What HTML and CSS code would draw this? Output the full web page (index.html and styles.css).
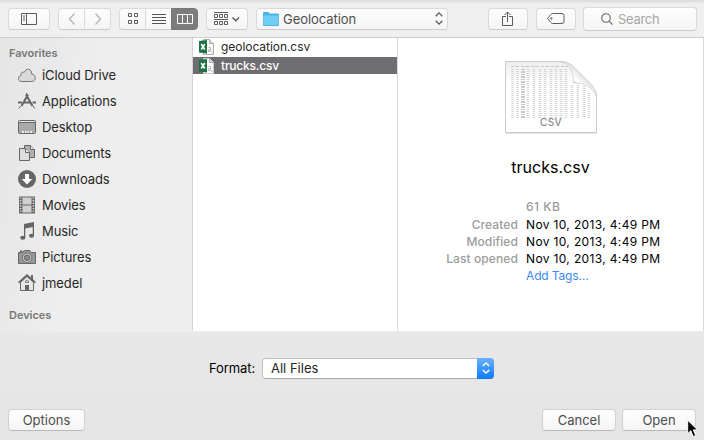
FILE: index.html
```html
<!DOCTYPE html>
<html lang="en">
<head>
<meta charset="utf-8">
<title>Open</title>
<link rel="stylesheet" href="styles.css">
</head>
<body>
<div class="dialog">
  <header class="toolbar">
    <button class="tool toggle" aria-label="Sidebar"><svg width="16" height="12" viewBox="0 0 16 12" fill="none" stroke="#5c5c5c"><path d="M.5.5h15v11H.5zM5.5.5v11M2 3h2M2 5h2M2 7h2"/></svg></button>
    <div class="group nav">
      <button class="tool" aria-label="Back"><svg width="8" height="12" viewBox="0 0 8 12" fill="none" stroke="#b5b5b5" stroke-width="1.3"><path d="M6.5.5l-5 5.5 5 5.5"/></svg></button>
      <button class="tool" aria-label="Forward"><svg width="8" height="12" viewBox="0 0 8 12" fill="none" stroke="#b5b5b5" stroke-width="1.3"><path d="M1.500.5l5 5.500-5 5.500"/></svg></button>
    </div>
    <div class="group views">
      <button class="tool" aria-label="Icons"><svg width="10" height="11" viewBox="0 0 10 11" fill="none" stroke="#5c5c5c"><path d="M.5.5h3v3h-3zM6.500.5h3v3h-3zM.5 7.500h3v3h-3zM6.500 7.500h3v3h-3z"/></svg></button>
      <button class="tool" aria-label="List"><svg width="14" height="10" viewBox="0 0 14 10" stroke="#555"><path d="M0 .5h14M0 3.500h14M0 6.500h14M0 9.500h14"/></svg></button>
      <button class="tool active" aria-label="Columns"><svg width="16" height="10" viewBox="0 0 16 10" fill="none" stroke="#fff"><path d="M.5.5h15v9H.5zM5.500.5v9M10.500.5v9"/></svg></button>
    </div>
    <button class="tool arrange" aria-label="Arrange"><svg width="26" height="13" viewBox="0 0 26 13" fill="none" stroke="#5c5c5c"><path d="M0 .5h14M0 7.500h14M.5 2.500h3v3h-3zM5.500 2.500h3v3h-3zM10.500 2.500h3v3h-3zM.5 9.500h3v3h-3zM5.500 9.500h3v3h-3zM10.500 9.500h3v3h-3z"/><path stroke-width="1.500" d="M18.500 5.500l3.200 3.200L25 5.500"/></svg></button>
    <button class="tool folder"><svg width="16" height="14" viewBox="0 0 16 14"><path fill="#4cb4e2" d="M0 1.500Q0 0 1 0h4.500l1 1.500H15q1 0 1 1V13q0 1-1 1H1q-1 0-1-1z"/><path fill="#70cdf4" d="M.5 3.500h15v9.500H.5z"/></svg><span class="label">Geolocation</span><svg width="8" height="13" viewBox="0 0 8 13" fill="none" stroke="#5a5a5a" stroke-width="1.300"><path d="M.7 4.200L4 .9l3.300 3.300M.7 8.800L4 12.100l3.300-3.300"/></svg></button>
    <button class="tool share" aria-label="Share"><svg width="12" height="16" viewBox="0 0 12 16" fill="none" stroke="#5c5c5c"><path d="M4 5.500H.5v9h10v-9H7M5.500 11V1M2.500 4l3-3 3 3"/></svg></button>
    <button class="tool tag" aria-label="Tags"><svg width="18" height="11" viewBox="0 0 18 11" fill="none" stroke="#5c5c5c"><path d="M5.500.5H15q2 0 2 2v6q0 2-2 2H5.500Q4.500 10.500.5 5.500 4.500.5 5.500.5z"/><circle cx="4.200" cy="5.500" r=".8"/></svg></button>
    <div class="search"><svg width="12" height="12" viewBox="0 0 12 12" fill="none" stroke="#666" stroke-width="1.100"><circle cx="5" cy="5" r="4.300"/><path d="M8.100 8.100l3.500 3.500"/></svg><span class="label">Search</span></div>
  </header>

  <main class="browser">
    <nav class="sidebar">
      <h2 class="first">Favorites</h2>
      <ul>
        <li><svg width="18" height="18" viewBox="0 0 18 18"><path fill="#d9d9d9" stroke="#777" d="M4 15.500C-.4 15.500-.6 10.500 3 9.500c-.6-2.700 1.500-4 3.200-3.200C8 1.500 14 2.500 13.700 8c4.500.2 5 7.500 0 7.500z"/></svg><span>iCloud Drive</span></li>
        <li><svg width="18" height="18" viewBox="0 0 18 18" fill="none" stroke="#666"><path stroke-width="2" d="M8 2.500l6.500 11.500M10 2.500L3.500 14"/><path stroke-width="2" d="M0 10.500h4M6 10.500h6M14.500 10.500H18"/><path d="M2.500 14l-1.700 2.500M15 14l1.700 2.500M8.500 1v2"/></svg><span>Applications</span></li>
        <li><svg width="18" height="18" viewBox="0 0 18 18"><rect x=".5" y="2.500" width="17" height="13" rx="1" fill="#aaa" stroke="#666"/><path stroke="#e5e5e5" d="M1 3.500h16"/><path stroke="#666" d="M1 4.500h16"/><path fill="#eee" d="M4 13h10v2H4z"/><path stroke="#888" stroke-width=".7" d="M6.500 13v2M9 13v2M11.500 13v2"/></svg><span>Desktop</span></li>
        <li><svg width="18" height="18" viewBox="0 0 18 18" stroke="#666"><path fill="#b0b0b0" d="M6.500 1.500h6l4 4v8h-10z"/><path fill="#eee" d="M12.500 1.500v4h4"/><path fill="#ddd" d="M1.500 4.500h6l4 4v8h-10z"/><path fill="#f0f0f0" d="M7.500 4.500v4h4"/></svg><span>Documents</span></li>
        <li><svg width="18" height="18" viewBox="0 0 18 18"><circle cx="9" cy="9" r="9" fill="#666"/><path fill="#fff" d="M7 4h4v5h3.200L9 14.500 3.800 9H7z"/></svg><span>Downloads</span></li>
        <li><svg width="18" height="18" viewBox="0 0 18 18"><path fill="#666" d="M1 .5h16v17H1z"/><path fill="#d1d1d1" d="M4.500 1.500h9v7h-9zM4.500 9.500h9v7h-9z"/><path stroke="#e5e5e5" stroke-width="1.500" stroke-dasharray="1.200 1.400" d="M2.600 1.500v15.500M15.400 1.500v15.500"/></svg><span>Movies</span></li>
        <li><svg width="18" height="18" viewBox="0 0 18 18" fill="#666"><path d="M6 2l10-2v13.500h-1.300V5L7.300 6.500v9H6z"/><ellipse cx="4.800" cy="15.700" rx="2.600" ry="2"/><ellipse cx="13.500" cy="13.700" rx="2.600" ry="2"/></svg><span>Music</span></li>
        <li><svg width="18" height="18" viewBox="0 0 18 18"><path fill="#969696" stroke="#666" d="M.5 4.500h4.300L6.200 2.500h5.600l1.400 2h4.300v11H.5z"/><path fill="#666" d="M2 2.500h2.500v1.500H2z"/><circle cx="9" cy="9.800" r="4.600" fill="#ccc" stroke="#666" stroke-width=".8"/><circle cx="9" cy="9.800" r="2.700" fill="#888" stroke="#666"/></svg><span>Pictures</span></li>
        <li><svg width="18" height="18" viewBox="0 0 18 18"><path fill="#e7e7e7" stroke="#666" d="M2.500 8.500L9 2.500l6.500 6v8h-13z"/><path fill="#666" d="M13 1h2v5h-2zM7 11h4v6H7z"/><path fill="none" stroke="#666" stroke-width="1.800" d="M.6 8.600L9 1.300l8.400 7.300"/><path fill="#ccc" stroke="#666" stroke-width=".7" d="M7.500 8.500V7Q9 5 10.500 7v1.500zM9 13.500h1"/></svg><span>jmedel</span></li>
      </ul>
      <h2 class="devices">Devices</h2>
    </nav>

    <section class="files">
      <div class="file"><svg width="16" height="16" viewBox="0 0 16 16"><path fill="#fafafa" stroke="#aaa" d="M4.500.5h6l4 4v11h-10z"/><path fill="#ddd" stroke="#999" stroke-width=".8" d="M10.500.5v4h4"/><path fill="#1e7145" d="M0 2l8-1v13.500L0 13.500z"/><path stroke="#fff" stroke-width="1.600" d="M2.200 5l3.600 5.500M5.800 5l-3.600 5.500"/><path stroke="#bbb" fill="none" d="M9.500 8.500h2v4h-2v-2h2M13 12.500v1.500"/></svg><span>geolocation.csv</span></div>
      <div class="file selected"><svg width="16" height="16" viewBox="0 0 16 16"><path fill="#fafafa" stroke="#ccc" d="M4.500.5h6l4 4v11h-10z"/><path fill="#ddd" stroke="#999" stroke-width=".8" d="M10.500.5v4h4"/><path fill="#1e7145" d="M0 2l8-1v13.500L0 13.500z"/><path stroke="#fff" stroke-width="1.600" d="M2.200 5l3.600 5.500M5.800 5l-3.600 5.500"/><path stroke="#bbb" fill="none" d="M9.500 8.500h2v4h-2v-2h2M13 12.500v1.500"/></svg><span>trucks.csv</span></div>
    </section>

    <section class="preview">
      <svg class="document" width="98" height="78" viewBox="0 0 98 78">
        <defs>
          <linearGradient id="curl" gradientUnits="userSpaceOnUse" x1="71" y1="26" x2="82" y2="15"><stop offset="0" stop-color="#c4c4c4"/><stop offset=".35" stop-color="#fff"/><stop offset="1" stop-color="#dedede"/></linearGradient>
          <linearGradient id="sheet" x1="0" y1="0" x2="0" y2="1"><stop offset="0" stop-color="#ededed"/><stop offset=".3" stop-color="#fff"/></linearGradient>
        </defs>
        <path stroke="#e4e4e4" d="M3 74.500h92"/>
        <path fill="url(#sheet)" stroke="#cbcbcb" d="M3.500 2.500H58q7 0 12 4l19 19q5.500 5.500 5.500 13v35h-91z"/>
        <path stroke="#c8c8c8" stroke-dasharray="3 1 4 2" d="M9 7.500h57"/>
        <g stroke="#d4d4d4" stroke-dasharray="1 1">
          <path stroke-width="2.600" d="M10.500 10v49M15.500 10v49M26 10v49M32 10v49M38 10v49M43 10v49M49 10v49M54 10v49M59 10v49M64 10v49M70 26v33M76 26v33M82 27v32M87 34v25"/>
          <path stroke="#c9c9c9" stroke-width="4" stroke-dasharray="1 1 2 1" d="M21 10v49"/>
        </g>
        <path fill="url(#curl)" stroke="#c8c8c8" stroke-width=".7" d="M60 2.700q12 4 11.500 21.300 16-1 23 13-.5-7-5.500-11.500L70 6.500q-4-3.500-10-3.800z"/>
        <text x="49" y="67" text-anchor="middle">CSV</text>
      </svg>
      <h1>trucks.csv</h1>
      <dl>
        <dt></dt><dd class="size">61 KB</dd>
        <dt>Created</dt><dd class="date">Nov 10, 2013, 4:49 PM</dd>
        <dt>Modified</dt><dd class="date">Nov 10, 2013, 4:49 PM</dd>
        <dt>Last opened</dt><dd class="date">Nov 10, 2013, 4:49 PM</dd>
        <dt></dt><dd class="add">Add Tags…</dd>
      </dl>
    </section>
  </main>

  <footer class="footer">
    <div class="format"><label>Format:</label><div class="select"><span>All Files</span><i><svg width="8" height="12" viewBox="0 0 8 12" fill="none" stroke="#fff" stroke-width="1.500"><path d="M.8 4L4 1l3.200 3M.8 8L4 11l3.200-3"/></svg></i></div></div>
    <div class="actions"><button class="options">Options</button><button class="cancel">Cancel</button><button class="open">Open</button></div>
  </footer>
  <svg class="cursor" width="13" height="19" viewBox="0 0 13 19"><path fill="#000" stroke="#fff" d="M.7 1.200v13.500l3.100-3 2.400 5.800 2.500-1-2.400-5.600h4.300z"/></svg>
</div>
</body>
</html>
```
FILE: styles.css
```css
* { box-sizing: border-box; }
body { margin: 0; }
button { font: inherit; color: inherit; letter-spacing: inherit; padding: 0; margin: 0; }
svg { display: block; flex: none; }
.dialog {
  width: 704px; height: 440px; position: relative; overflow: hidden;
  display: flex; flex-direction: column;
  font: 13px/18px Inter, "Liberation Sans", sans-serif;
  letter-spacing: -.1px; color: #262626; background: #e8e8e8;
}
.toolbar {
  height: 38px; flex: none; display: flex; align-items: center; padding: 0 7px 0 8px;
  background: linear-gradient(#dadada, #efefef 4px); border-bottom: 1px solid #cecece;
}
.tool, .search {
  height: 22px; display: flex; align-items: center; justify-content: center;
  border: 1px solid #d9d9d9; border-bottom-color: #cbcbcb; border-radius: 4px;
  background: linear-gradient(#fdfdfd, #f5f5f5); flex: none;
}
.group { display: flex; margin-left: 8px; }
.group .tool { width: 27px; margin-right: -1px; border-radius: 0; }
.group .tool:first-child { border-radius: 4px 0 0 4px; }
.group .tool:last-child { border-radius: 0 4px 4px 0; margin-right: 0; }
.toggle { width: 42px; }
.group .active { background: #7c7c7c; border-color: #777; }
.arrange { width: 42px; margin-left: 8px; }
.folder { width: 192px; margin-left: 8px; padding: 0 4px 0 6px; color: #4d4d4d; letter-spacing: -.05px; }
.folder .label { flex: 1; text-align: left; margin-left: 4px; }
.share { width: 40px; margin-left: 40px; }
.tag { width: 40px; margin-left: 8px; }
.search { width: 114px; height: 24px; margin-left: 7px; justify-content: flex-start; padding-left: 17px; color: #a6a6a6; letter-spacing: -.3px; }
.search .label { margin-left: 5px; }
.browser { height: 293px; flex: none; display: flex; background: #fff; border-right: 1px solid #d8d8d8; }
.sidebar { width: 193px; border-right: 1px solid #d3d3d3; background: linear-gradient(100deg, #e5e5e5, #eee 45%); padding-top: 6px; }
h2 { margin: 0; padding-left: 9px; font-size: 11px; line-height: 18px; font-weight: 600; color: #777; letter-spacing: -.05px; }
ul { list-style: none; margin: 0; padding: 0; }
li { height: 26px; display: flex; align-items: center; gap: 6px; padding-left: 18px; }
.devices { margin-top: 10px; }
.files { width: 205px; border-right: 1px solid #d8d8d8; }
.file { height: 18px; display: flex; align-items: center; gap: 6px; padding-left: 6px; font-size: 12px; letter-spacing: -.05px; }
.file + .file { margin-top: 1px; height: 17px; }
.selected { background: #6e6d71; color: #fff; font-weight: 500; }
.file.selected { letter-spacing: -.2px; }
.preview { flex: 1; padding-top: 21px; color: #000; }
.document { margin-left: 104px; }
.document text { font-size: 10px; letter-spacing: .3px; font-weight: 500; fill: #888; }
h1 { margin: 19px 0 0; font-size: 16px; line-height: 22px; font-weight: 400; text-align: center; letter-spacing: 0; }
dl { margin: 20px 0 0; display: grid; grid-template-columns: 120px 1fr; column-gap: 8px; grid-template-rows: 18px repeat(4, 17px); font-size: 12px; line-height: 17px; }
dt { text-align: right; color: #9b9b9b; font-weight: 500; letter-spacing: .1px; }
dd { margin: 0; white-space: nowrap; }
.date { letter-spacing: .35px; }
.size { color: #9b9b9b; font-weight: 500; letter-spacing: .5px; }
.add { color: #3b88f5; letter-spacing: -.15px; }
.footer { flex: 1; display: flex; flex-direction: column; background: linear-gradient(#e8e8e8, #e5e5e5); border-top: 1px solid #ececec; }
.format { display: flex; align-items: center; margin: 25px 0 0 209px; height: 22px; gap: 6px; color: #000; }
label { width: 47px; white-space: nowrap; }
.select { width: 232px; height: 21px; display: flex; align-items: center; border: 1px solid #bfbfbf; border-bottom-color: #a9a9a9; border-radius: 4px; background: #fff; padding-left: 8px; color: #262626; }
.select span { flex: 1; letter-spacing: 0; }
.select i { width: 17px; height: 21px; margin-right: -1px; display: flex; align-items: center; justify-content: center; border-radius: 0 4px 4px 0; background: linear-gradient(#69b1fb, #0d7bff); }
.actions { display: flex; margin: 30px 8px 0; color: #4d4d4d; letter-spacing: 0; }
.actions button { height: 22px; border: 1px solid #d0d0d0; border-bottom-color: #b9b9b9; border-radius: 4px; background: linear-gradient(#fff, #f4f4f4); }
.options { width: 77px; }
.actions .cancel { width: 74px; margin-left: auto; }
.actions .open { width: 74px; margin-left: 6px; }
.cursor { position: absolute; left: 687px; top: 419px; }
```
